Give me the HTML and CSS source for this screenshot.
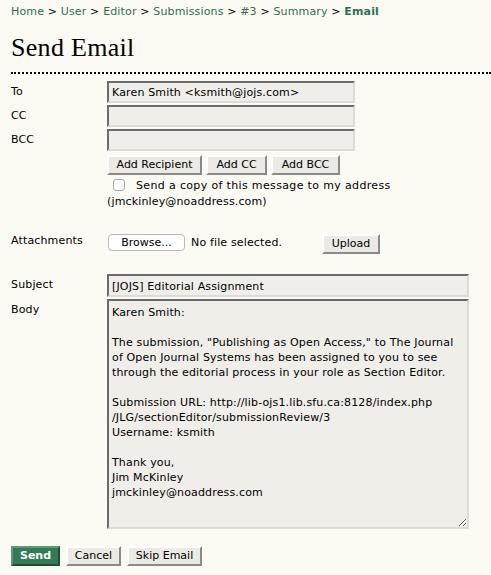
FILE: index.html
```html
<!DOCTYPE html>
<html>
<head>
<meta charset="utf-8">
<link rel="stylesheet" href="styles.css">
</head>
<body>
<div class="page">
  <nav class="crumbs"><a href="#">Home</a> &gt; <a href="#">User</a> &gt; <a href="#">Editor</a> &gt; <a href="#">Submissions</a> &gt; <a href="#">#3</a> &gt; <a href="#">Summary</a> &gt; <strong>Email</strong></nav>
  <h1 class="title">Send Email</h1>
  <div class="form">
    <div class="row">
      <div class="label">To</div>
      <div class="field"><input class="input short" type="text" value="Karen Smith &lt;ksmith@jojs.com&gt;"></div>
    </div>
    <div class="row">
      <div class="label">CC</div>
      <div class="field"><input class="input short" type="text" value=""></div>
    </div>
    <div class="row">
      <div class="label">BCC</div>
      <div class="field"><input class="input short" type="text" value=""></div>
    </div>
    <div class="row">
      <div class="label"></div>
      <div class="field buttons">
        <button class="btn w-recipient" type="button">Add Recipient</button>
        <button class="btn w-cc" type="button">Add CC</button>
        <button class="btn w-bcc" type="button">Add BCC</button>
      </div>
    </div>
    <div class="row">
      <div class="label"></div>
      <div class="field copy">
        <label class="check"><span class="box"></span>Send a copy of this message to my address</label>
        <div class="addr">(jmckinley@noaddress.com)</div>
      </div>
    </div>
    <div class="row attach">
      <div class="label">Attachments</div>
      <div class="field files">
        <button class="browse" type="button">Browse...</button>
        <span class="nofile">No file selected.</span>
        <button class="btn w-upload" type="button">Upload</button>
      </div>
    </div>
    <div class="row subject">
      <div class="label">Subject</div>
      <div class="field"><input class="input long" type="text" value="[JOJS] Editorial Assignment"></div>
    </div>
    <div class="row">
      <div class="label">Body</div>
      <div class="field"><textarea class="input body">Karen Smith:

The submission, "Publishing as Open Access," to The Journal
of Open Journal Systems has been assigned to you to see
through the editorial process in your role as Section Editor.

Submission URL: http://lib-ojs1.lib.sfu.ca:8128/index.php
/JLG/sectionEditor/submissionReview/3
Username: ksmith

Thank you,
Jim McKinley
jmckinley@noaddress.com</textarea></div>
    </div>
  </div>
  <div class="actions">
    <button class="btn send w-send" type="button">Send</button>
    <button class="btn w-cancel" type="button">Cancel</button>
    <button class="btn w-skip" type="button">Skip Email</button>
  </div>
</div>
</body>
</html>
```

FILE: styles.css
```css
html, body {
  margin: 0;
  padding: 0;
  background: #fbfaf3;
}
body {
  font-family: "DejaVu Sans", Verdana, sans-serif;
  font-size: 11px;
  letter-spacing: 0.15px;
  color: #000;
}
.page {
  padding: 5px 0 0 11px;
}
.crumbs {
  line-height: 14px;
  color: #000;
}
.crumbs a {
  color: #2f6f4e;
  text-decoration: none;
}
.crumbs strong {
  color: #2f6f4e;
}
.title {
  font-family: "Liberation Serif", Georgia, serif;
  font-weight: normal;
  letter-spacing: 0.3px;
  font-size: 26px;
  line-height: 28px;
  margin: 15px 0 0 0;
  padding-bottom: 10px;
  border-bottom: 2px dotted #000;
}
.form {
  margin-top: 7px;
  display: flex;
  flex-direction: column;
}
.row {
  display: flex;
  margin-bottom: 2px;
}
.label {
  width: 96px;
  flex: none;
  padding-top: 4px;
  line-height: 14px;
}
.field {
  flex: 1;
}
.input {
  box-sizing: border-box;
  font-family: "DejaVu Sans", Verdana, sans-serif;
  font-size: 11px;
  letter-spacing: 0.15px;
  color: #000;
  background: #efeee8;
  border: 2px solid;
  border-color: #6b6b6b #dcdbd5 #dcdbd5 #6b6b6b;
  padding: 1px 3px;
  margin: 0;
  outline: none;
}
.short {
  width: 248px;
  height: 22px;
}
.long {
  width: 362px;
  height: 23px;
}
.body {
  width: 362px;
  height: 230px;
  line-height: 15px;
  padding: 4px 3px 2px;
  display: block;
  resize: both;
  white-space: pre;
  overflow: hidden;
}
.buttons {
  display: flex;
  gap: 4px;
  padding-top: 2px;
}
.btn {
  box-sizing: border-box;
  font-family: "DejaVu Sans", Verdana, sans-serif;
  font-size: 11px;
  color: #000;
  background: #ebeae4;
  border: 2px solid;
  border-color: #ffffff #8a8a86 #8a8a86 #ffffff;
  padding: 0;
  height: 20px;
  line-height: 16px;
  margin: 0;
  text-align: center;
}
.w-recipient { width: 95px; }
.w-cc { width: 61px; }
.w-bcc { width: 69px; }
.w-upload { width: 58px; }
.w-send { width: 49px; }
.w-cancel { width: 55px; }
.w-skip { width: 75px; }
.copy {
  padding-top: 1px;
}
.check {
  display: flex;
  align-items: center;
  height: 14px;
  padding-left: 6px;
  letter-spacing: 0.35px;
}
.box {
  box-sizing: border-box;
  width: 12px;
  height: 12px;
  border: 1px solid #a9a9a9;
  border-radius: 3px;
  background: #fff;
  margin-right: 11px;
}
.addr {
  margin-top: 3px;
  line-height: 14px;
}
.attach {
  margin-top: 21px;
}
.attach .label {
  padding-top: 2px;
}
.files {
  display: flex;
  align-items: flex-start;
  padding-top: 2px;
}
.browse {
  font-family: "DejaVu Sans", Verdana, sans-serif;
  font-size: 11px;
  background: #fff;
  border: 1px solid #b9b9b9;
  border-radius: 4px;
  width: 77px;
  height: 17px;
  padding: 0;
  margin: 0 0 0 1px;
  color: #000;
}
.nofile {
  display: inline-block;
  width: 131px;
  margin-left: 6px;
  line-height: 17px;
}
.subject {
  margin-top: 18px;
}
.subject .input {
  padding-top: 2px;
}
.actions {
  margin-top: 15px;
  display: flex;
  gap: 5px;
}
.send {
  background: #347a57;
  color: #fff;
  font-weight: bold;
  border-color: #5d9a7b #1f4f37 #1f4f37 #5d9a7b;
}
.actions .btn + .btn {
  margin-left: 1px;
}
```
